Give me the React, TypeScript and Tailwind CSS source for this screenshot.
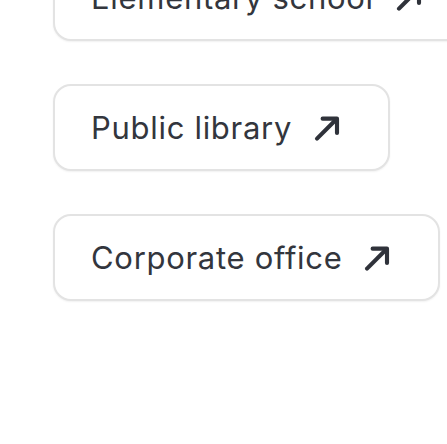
import React from "react";

const Arrow = () => (
  <svg width="30" height="30" viewBox="0 0 24 24" fill="none" stroke="#2f323a" strokeWidth="3.3" strokeLinecap="round" strokeLinejoin="round" className="shrink-0">
    <path d="M4 20.5 L19.5 5" />
    <path d="M8.5 4.5 H20 V16" />
  </svg>
);

const Card = ({ label }: { label: string }) => (
  <div className="flex shrink-0 items-center gap-[20px] whitespace-nowrap rounded-[18px] border-2 border-[#e3e3e3] bg-white pl-[36px] pr-[46px] h-[87px] w-max shadow-[0_1px_2px_rgba(0,0,0,0.06)]">
    <span className="text-[31px] leading-none text-[#33363d] tracking-[0.7px]" style={{ fontFamily: "Inter, 'Open Sans', sans-serif" }}>
      {label}
    </span>
    <Arrow />
  </div>
);

export default function App() {
  return (
    <div className="h-[444px] w-[447px] overflow-hidden bg-white">
      <div className="mt-[-46px] flex flex-col items-start gap-[43px] pl-[53px]">
        <Card label="Elementary school" />
        <Card label="Public library" />
        <Card label="Corporate office" />
      </div>
    </div>
  );
}
